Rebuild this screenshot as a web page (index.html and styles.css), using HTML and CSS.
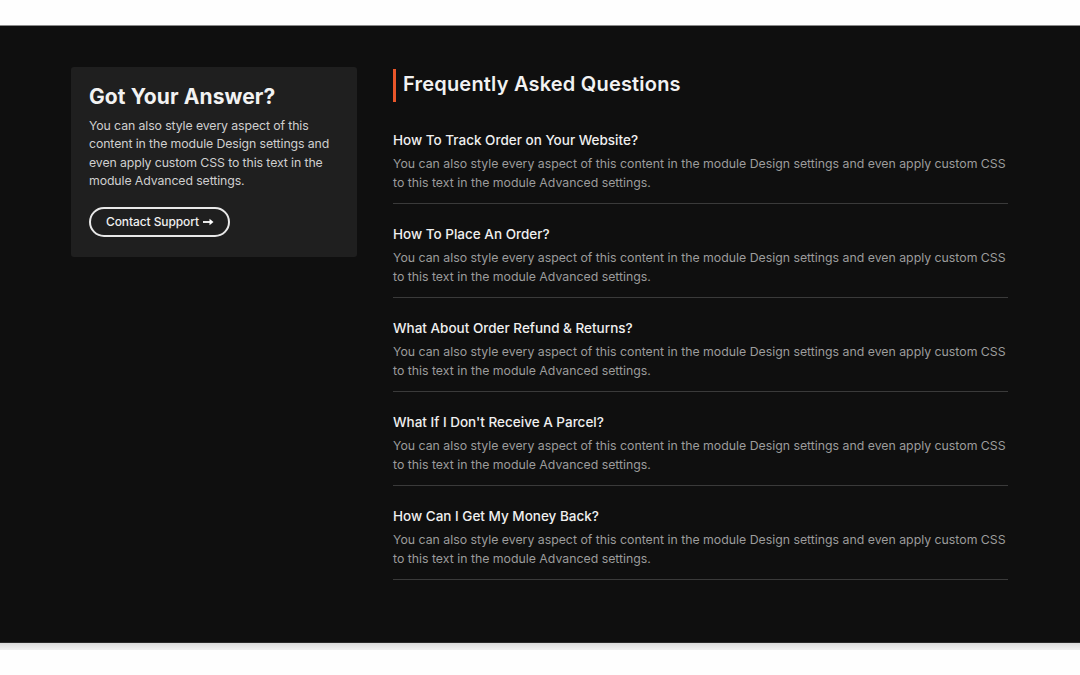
FILE: index.html
```html
<!DOCTYPE html>
<html lang="en">
<head>
<meta charset="utf-8">
<title>FAQ</title>
<link rel="stylesheet" href="styles.css">
</head>
<body>
<div class="topbar"></div>
<section class="faq-section">
  <div class="container">
    <aside class="card">
      <h2 class="card-title">Got Your Answer?</h2>
      <p class="card-text">You can also style every aspect of this content in the module Design settings and even apply custom CSS to this text in the module Advanced settings.</p>
      <a class="btn" href="#">Contact Support <svg class="arrow" width="11" height="8" viewBox="0 0 11 8"><path d="M0 4h8" stroke="#fff" stroke-width="1.8"/><path d="M6.5 0.8L10.5 4L6.5 7.2Z" fill="#fff"/></svg></a>
    </aside>
    <div class="faq">
      <h1 class="faq-title">Frequently Asked Questions</h1>
      <div class="item">
        <h3 class="q">How To Track Order on Your Website?</h3>
        <p class="a">You can also style every aspect of this content in the module Design settings and even apply custom CSS to this text in the module Advanced settings.</p>
      </div>
      <div class="item">
        <h3 class="q">How To Place An Order?</h3>
        <p class="a">You can also style every aspect of this content in the module Design settings and even apply custom CSS to this text in the module Advanced settings.</p>
      </div>
      <div class="item">
        <h3 class="q">What About Order Refund &amp; Returns?</h3>
        <p class="a">You can also style every aspect of this content in the module Design settings and even apply custom CSS to this text in the module Advanced settings.</p>
      </div>
      <div class="item">
        <h3 class="q">What If I Don't Receive A Parcel?</h3>
        <p class="a">You can also style every aspect of this content in the module Design settings and even apply custom CSS to this text in the module Advanced settings.</p>
      </div>
      <div class="item">
        <h3 class="q">How Can I Get My Money Back?</h3>
        <p class="a">You can also style every aspect of this content in the module Design settings and even apply custom CSS to this text in the module Advanced settings.</p>
      </div>
    </div>
  </div>
</section>
<div class="bottombar"></div>
</body>
</html>
```
FILE: styles.css
```css
* { box-sizing: border-box; }
html, body { margin: 0; padding: 0; }
body {
  background: #fefefe;
  font-family: Inter, "Liberation Sans", Arial, sans-serif;
  color: #eeeeee;
}
.topbar {
  height: 26px;
  background: #fefefe;
  border-bottom: 1px solid #8a8a8a;
}
.faq-section {
  background: #0f0f0f;
  height: 617px;
  border-bottom: 1px solid #2a2a2a;
}
.bottombar {
  height: 7px;
  background: linear-gradient(#dcdcdc, #f2f2f2);
}
.container {
  display: grid;
  grid-template-columns: 286px 615px;
  column-gap: 36px;
  padding: 41px 0 0 71px;
  align-items: start;
}
.card {
  background: #1f1f1f;
  border-radius: 3px;
  padding: 17px 18px 20px 18px;
}
.card-title {
  margin: 0;
  font-size: 21px;
  line-height: 26px;
  font-weight: 700;
  letter-spacing: 0.1px;
  color: #f2f2f2;
}
.card-text {
  margin: 7px 0 0;
  font-size: 12.3px;
  line-height: 18.4px;
  color: #cfcfcf;
  letter-spacing: -0.1px;
}
.btn {
  display: inline-flex;
  align-items: center;
  gap: 4px;
  margin-top: 16px;
  height: 30px;
  padding: 0 14px 0 15px;
  border: 2px solid #e8e8e8;
  border-radius: 15px;
  color: #f0f0f0;
  font-size: 12px;
  font-weight: 500;
  text-decoration: none;
  letter-spacing: -0.1px;
}
.arrow { display: block; }
.faq-title {
  margin: 2px 0 8px;
  height: 33px;
  border-left: 3px solid #e8562a;
  padding-left: 7px;
  font-size: 20px;
  line-height: 30px;
  font-weight: 600;
  color: #f2f2f2;
  letter-spacing: 0.2px;
}
.item {
  padding: 20px 0 11px;
  border-bottom: 1px solid #3a3a3a;
}
.q {
  margin: 0;
  font-size: 13.5px;
  line-height: 20px;
  font-weight: 500;
  color: #f0f0f0;
  letter-spacing: 0;
}
.a {
  margin: 5px 0 0;
  font-size: 12.3px;
  line-height: 18.5px;
  color: #9c9c9c;
  letter-spacing: 0;
}
```
